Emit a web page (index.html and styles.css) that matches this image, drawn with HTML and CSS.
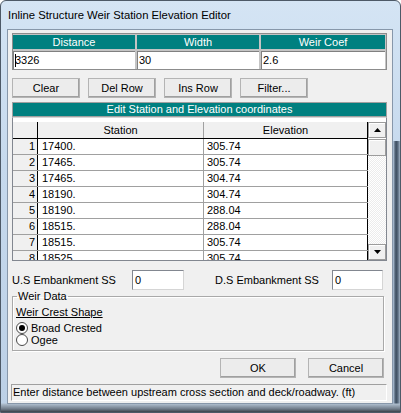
FILE: index.html
```html
<!DOCTYPE html>
<html lang="en">
<head>
    <meta charset="UTF-8">
    <title>Inline Structure Weir Station Elevation Editor</title>
    <link rel="stylesheet" href="styles.css">
</head>
<body>
    <div class="window">
        <div class="titlebar">Inline Structure Weir Station Elevation Editor</div>

        <div class="client">
            <div class="top-grid">
                <div class="hdr">Distance</div>
                <div class="hdr">Width</div>
                <div class="hdr">Weir Coef</div>
                <div class="cell"><span class="caret"></span>3326</div>
                <div class="cell">30</div>
                <div class="cell">2.6</div>
            </div>

            <div class="btn-row">
                <button class="btn">Clear</button>
                <button class="btn">Del Row</button>
                <button class="btn">Ins Row</button>
                <button class="btn">Filter...</button>
            </div>

            <div class="bar">Edit Station and Elevation coordinates</div>

            <div class="table">
                <div class="rows">
                    <div class="row head">
                        <div class="num"></div>
                        <div class="sta">Station</div>
                        <div class="elev">Elevation</div>
                    </div>
                    <div class="row"><div class="num">1</div><div class="sta">17400.</div><div class="elev">305.74</div></div>
                    <div class="row"><div class="num">2</div><div class="sta">17465.</div><div class="elev">305.74</div></div>
                    <div class="row"><div class="num">3</div><div class="sta">17465.</div><div class="elev">304.74</div></div>
                    <div class="row"><div class="num">4</div><div class="sta">18190.</div><div class="elev">304.74</div></div>
                    <div class="row"><div class="num">5</div><div class="sta">18190.</div><div class="elev">288.04</div></div>
                    <div class="row"><div class="num">6</div><div class="sta">18515.</div><div class="elev">288.04</div></div>
                    <div class="row"><div class="num">7</div><div class="sta">18515.</div><div class="elev">305.74</div></div>
                    <div class="row"><div class="num">8</div><div class="sta">18525.</div><div class="elev">305.74</div></div>
                </div>
                <div class="scrollbar">
                    <div class="sb-btn">
                        <svg width="7" height="4" viewBox="0 0 7 4"><polygon points="3.5,0 7,4 0,4" fill="#000"/></svg>
                    </div>
                    <div class="sb-thumb"></div>
                    <div class="sb-track"></div>
                    <div class="sb-btn">
                        <svg width="7" height="4" viewBox="0 0 7 4"><polygon points="0,0 7,0 3.5,4" fill="#000"/></svg>
                    </div>
                </div>
            </div>

            <div class="emb-row">
                <span class="emb-label us">U.S Embankment SS</span>
                <div class="field us">0</div>
                <span class="emb-label ds">D.S Embankment SS</span>
                <div class="field ds">0</div>
            </div>

            <fieldset class="group">
                <legend>Weir Data</legend>
                <div class="sub">Weir Crest Shape</div>
                <div class="radio-row">
                    <span class="radio checked"><span class="dot"></span></span>
                    <span>Broad Crested</span>
                </div>
                <div class="radio-row">
                    <span class="radio"></span>
                    <span>Ogee</span>
                </div>
            </fieldset>

            <div class="ok-row">
                <button class="btn wide">OK</button>
                <button class="btn wide">Cancel</button>
            </div>

            <div class="status">Enter distance between upstream cross section and deck/roadway. (ft)</div>
        </div>
    </div>
</body>
</html>
```

FILE: styles.css
```css
* {
    margin: 0;
    padding: 0;
    box-sizing: border-box;
}

body {
    width: 401px;
    height: 413px;
    overflow: hidden;
    font-family: "Liberation Sans", Arial, sans-serif;
    font-size: 11px;
    color: #000;
    background: #fff;
}

/* window frame */
.window {
    width: 401px;
    height: 413px;
    display: flex;
    flex-direction: column;
    padding: 0 7px 8px 6px;
    border: 1px solid #4d5967;
    border-radius: 6px 6px 0 0;
    background:
        linear-gradient(to top, #3b4149 0, #6f7b89 3px, #aebdcd 8px, transparent 9px),
        linear-gradient(to right, transparent 392px, #8294a9 393px, #3c4c5e 395px, #5b6d81 397px, #a4b4c6 399px) 0 140px / 401px 280px no-repeat,
        linear-gradient(to bottom, #d4e4f4 0%, #c6d9ed 40%, #bcd0e6 100%);
}

.titlebar {
    height: 28px;
    line-height: 29px;
    padding-left: 1px;
    font-size: 11.3px;
    color: #000;
    white-space: nowrap;
}

.client {
    height: 375px;
    border: 1px solid #8797aa;
    background: #f0f0f0;
    padding: 3px 5px 0 4px;
    display: flex;
    flex-direction: column;
}

/* top input grid */
.top-grid {
    height: 37px;
    display: grid;
    grid-template-columns: 122px 122px 124px;
    grid-template-rows: 14px 18px;
    gap: 2px;
    padding: 1px 1px 0 0;
    border: 1px solid #8c8c8c;
    background: #c4c4c4;
    margin-bottom: 8px;
}

.hdr {
    background: #008080;
    color: #fff;
    text-align: center;
    line-height: 14px;
}

.cell {
    background: #fff;
    border-top: 1px solid #808080;
    border-left: 1px solid #808080;
    line-height: 16px;
    padding-left: 1px;
    white-space: nowrap;
}

.caret {
    display: inline-block;
    width: 1px;
    height: 13px;
    background: #000;
    vertical-align: -3px;
    margin-right: -1px;
}

/* buttons */
.btn-row {
    display: flex;
    gap: 8px;
    margin-bottom: 4px;
}

.btn {
    width: 68px;
    height: 20px;
    font-family: inherit;
    font-size: 11px;
    color: #000;
    background: #ececec;
    border: 1px solid;
    border-color: #fff #5f5f5f #5f5f5f #fff;
    box-shadow: inset -1px -1px 0 #a0a0a0;
    outline: 1px solid #b4b4b4;
    outline-offset: -1px;
}

.btn.wide {
    width: 76px;
}

.bar {
    height: 15px;
    border: 1px solid #a0a0a0;
    background: #008080;
    color: #fff;
    text-align: center;
    line-height: 13px;
}

/* station / elevation table */
.table {
    height: 144px;
    display: flex;
    border: 1px solid #828790;
    border-top-color: #d6d6d6;
    background: #fff;
    padding-top: 4px;
    overflow: hidden;
    margin-bottom: 9px;
}

.rows {
    width: 355px;
    overflow: hidden;
}

.row {
    display: grid;
    grid-template-columns: 25px 166px 164px;
    height: 16px;
    border-bottom: 1px solid #a0a0a0;
    line-height: 15px;
}

.row.head {
    height: 17px;
    border-bottom-color: #000;
    line-height: 16px;
    background: #f0f0f0;
}

.num {
    background: #f0f0f0;
    border-right: 1px solid #000;
    text-align: right;
    padding-right: 2px;
}

.sta {
    border-right: 1px solid #a0a0a0;
    padding-left: 4px;
}

.elev {
    border-right: 1px solid #000;
    padding-left: 3px;
}

.head .sta,
.head .elev {
    text-align: center;
    padding-left: 0;
}

.scrollbar {
    width: 18px;
    display: flex;
    flex-direction: column;
}

.sb-btn,
.sb-thumb {
    background: #f0f0f0;
    border: 1px solid #9c9c9c;
    box-shadow: inset 1px 1px 0 #fff;
}

.sb-btn {
    height: 16px;
    display: flex;
    align-items: center;
    justify-content: center;
}

.sb-thumb {
    height: 17px;
    margin-top: 1px;
}

.sb-track {
    flex: 1;
    background: repeating-conic-gradient(#ececec 0 25%, #fff 0 50%) 0 0 / 2px 2px;
}

/* embankment fields */
.emb-row {
    height: 20px;
    display: flex;
    align-items: center;
}

.emb-label.us {
    width: 120px;
}

.emb-label.ds {
    width: 117px;
    margin-left: 31px;
}

.field {
    height: 20px;
    background: #fff;
    border: 1px solid;
    border-color: #828790 #d5d5d5 #d5d5d5 #828790;
    line-height: 18px;
    padding-left: 2px;
}

.field.us {
    width: 52px;
}

.field.ds {
    width: 51px;
}

/* weir data group */
.group {
    height: 61px;
    margin-right: 3px;
    border: 1px solid #a9a9a9;
    box-shadow: inset 1px 1px 0 #fff, 1px 1px 0 #fff;
    padding: 3px 3px 0 3px;
}

.group legend {
    margin-left: 1px;
    padding: 0 1px;
    line-height: 13px;
}

.sub {
    line-height: 12px;
    text-decoration: underline;
    margin-bottom: 4px;
}

.radio-row {
    height: 12px;
    display: flex;
    align-items: center;
    gap: 3px;
    line-height: 12px;
}

.radio {
    width: 12px;
    height: 12px;
    border-radius: 50%;
    border: 1px solid #4a4a4a;
    background: #fff;
    display: flex;
    align-items: center;
    justify-content: center;
}

.radio .dot {
    width: 6px;
    height: 6px;
    border-radius: 50%;
    background: #000;
}

.ok-row {
    display: flex;
    justify-content: flex-end;
    gap: 12px;
    padding-right: 3px;
    margin-top: 7px;
    margin-bottom: 6px;
}

.status {
    height: 17px;
    width: 376px;
    margin-left: -1px;
    border: 1px solid;
    border-color: #a0a0a0 #fff #fff #a0a0a0;
    line-height: 15px;
    padding-left: 1px;
    white-space: nowrap;
    overflow: hidden;
}
```
